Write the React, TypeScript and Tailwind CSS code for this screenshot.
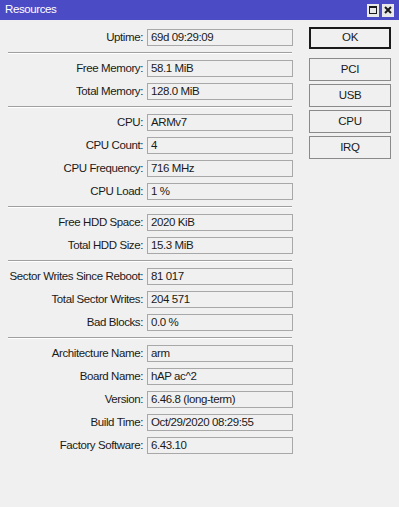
import React from "react";

type Row = { label: string; value: string };

const sections: Row[][] = [
  [{ label: "Uptime:", value: "69d 09:29:09" }],
  [
    { label: "Free Memory:", value: "58.1 MiB" },
    { label: "Total Memory:", value: "128.0 MiB" },
  ],
  [
    { label: "CPU:", value: "ARMv7" },
    { label: "CPU Count:", value: "4" },
    { label: "CPU Frequency:", value: "716 MHz" },
    { label: "CPU Load:", value: "1 %" },
  ],
  [
    { label: "Free HDD Space:", value: "2020 KiB" },
    { label: "Total HDD Size:", value: "15.3 MiB" },
  ],
  [
    { label: "Sector Writes Since Reboot:", value: "81 017" },
    { label: "Total Sector Writes:", value: "204 571" },
    { label: "Bad Blocks:", value: "0.0 %" },
  ],
  [
    { label: "Architecture Name:", value: "arm" },
    { label: "Board Name:", value: "hAP ac^2" },
    { label: "Version:", value: "6.46.8 (long-term)" },
    { label: "Build Time:", value: "Oct/29/2020 08:29:55" },
    { label: "Factory Software:", value: "6.43.10" },
  ],
];

function FieldRow({ label, value }: Row) {
  return (
    <div className="flex h-[17px] items-center">
      <div className="w-[144px] shrink-0 whitespace-nowrap pr-[1px] text-right text-[11.5px] leading-[17px] tracking-[-0.4px] text-[#1a1a1a]">
        {label}
      </div>
      <div className="ml-[3px] h-[17px] w-[146px] whitespace-nowrap border border-[#a8a8a8] bg-[#f0f0f0] pl-[3px] text-[11.5px] leading-[15px] tracking-[-0.4px] text-[#1a1a1a]">
        {value}
      </div>
    </div>
  );
}

function Btn({ children, primary }: { children: React.ReactNode; primary?: boolean }) {
  return (
    <div
      className={
        primary
          ? "flex h-[22px] w-[82px] items-center justify-center border border-[#1a1a1a] bg-[#f0f0f0] text-[11.5px] tracking-[-0.3px] text-[#1a1a1a] outline outline-1 outline-[#1a1a1a] -outline-offset-2"
          : "flex h-[23px] w-[82px] items-center justify-center border border-[#8a8a8a] bg-[#f0f0f0] text-[11.5px] tracking-[-0.3px] text-[#1a1a1a]"
      }
    >
      {children}
    </div>
  );
}

export default function App() {
  return (
    <div
      className="flex h-[507px] w-[399px] flex-col overflow-hidden bg-[#f0f0f0]"
      style={{ fontFamily: '"Liberation Sans", Arial, sans-serif' }}
    >
      <div className="flex h-[20px] shrink-0 items-center justify-between bg-[#4b4bc6] pl-[5px] pr-[5px]">
        <span className="text-[11.5px] tracking-[-0.4px] text-white">Resources</span>
        <div className="flex items-center gap-[3px]">
          <div className="flex h-[13px] w-[12px] items-center justify-center bg-[#e8e8e8]">
            <svg width="10" height="10" viewBox="0 0 10 10">
              <rect x="1.5" y="1.5" width="7" height="7" fill="none" stroke="#1a1a1a" strokeWidth="1" />
              <rect x="1" y="1" width="8" height="2" fill="#1a1a1a" />
            </svg>
          </div>
          <div className="flex h-[13px] w-[12px] items-center justify-center bg-[#e8e8e8]">
            <svg width="10" height="10" viewBox="0 0 10 10">
              <path d="M2 2 L8 8 M8 2 L2 8" stroke="#1a1a1a" strokeWidth="2" />
            </svg>
          </div>
        </div>
      </div>
      <div className="flex flex-1">
        <div className="flex w-[300px] flex-col gap-[6px] pl-[8px] pt-[9px]">
          {sections.map((sec, i) => (
            <React.Fragment key={i}>
              {i > 0 && (
                <div className="h-[2px] w-[284px] border-t border-[#a0a0a0] border-b border-b-white" />
              )}
              {sec.map((r) => (
                <div key={r.label} className="-ml-[8px]">
                  <FieldRow {...r} />
                </div>
              ))}
            </React.Fragment>
          ))}
        </div>
        <div className="flex flex-col pl-[9px] pt-[7px]">
          <Btn primary>OK</Btn>
          <div className="mt-[9px] flex flex-col gap-[3px]">
            <Btn>PCI</Btn>
            <Btn>USB</Btn>
            <Btn>CPU</Btn>
            <Btn>IRQ</Btn>
          </div>
        </div>
      </div>
    </div>
  );
}
